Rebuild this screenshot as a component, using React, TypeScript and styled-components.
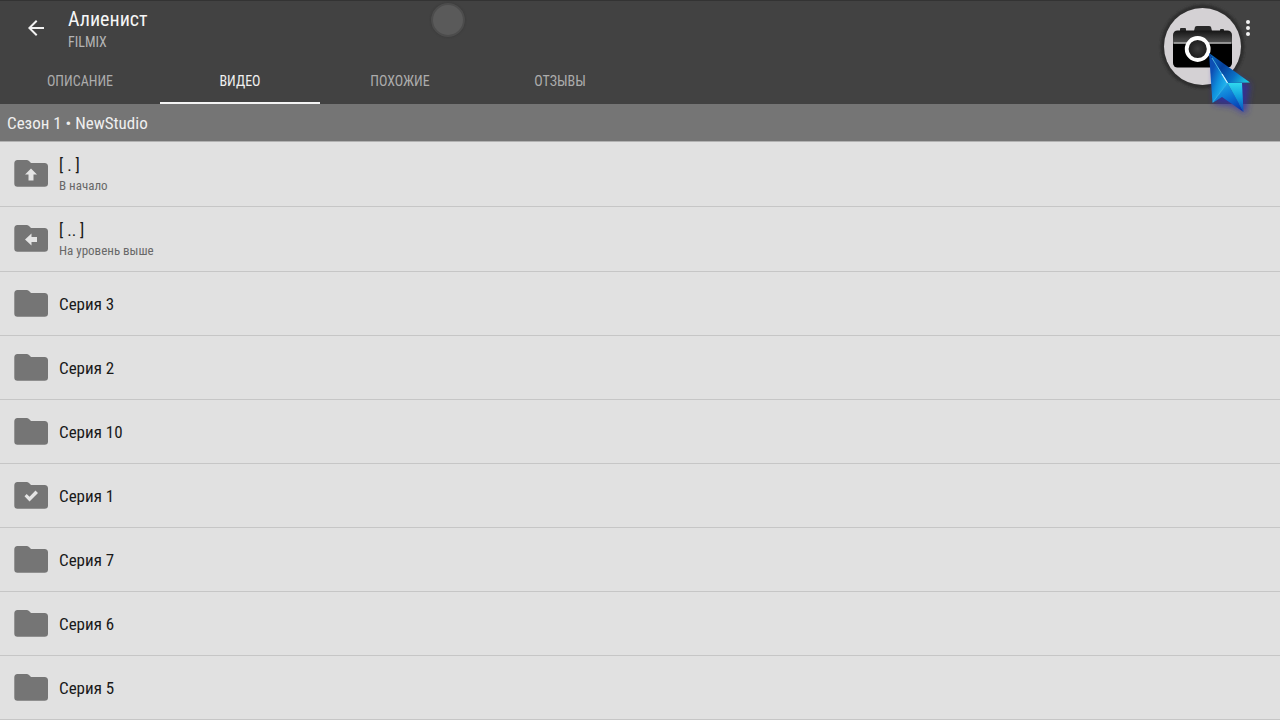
import React from "react";
import styled, { createGlobalStyle } from "styled-components";

const GlobalStyle = createGlobalStyle`
  *, *::before, *::after { box-sizing: border-box; }
  body {
    margin: 0;
    background: #e1e1e1;
    color: #191919;
    font-family: "Roboto Condensed", "Liberation Sans Narrow", Roboto, sans-serif;
  }
  button { font: inherit; color: inherit; border: 0; padding: 0; background: none; cursor: pointer; }
  h1, h2, p, ul { margin: 0; padding: 0; font-weight: 400; }
`;

const Screen = styled.div`
  position: relative;
  width: 100%;
  min-height: 100vh;
  overflow: hidden;
`;

const Header = styled.header`
  background: #424242;
  border-top: 1px solid #333333;
`;

const Toolbar = styled.div`
  display: flex;
  align-items: center;
  height: 54px;
  padding: 0 20px;
`;

const IconButton = styled.button`
  display: flex;
  align-items: center;
  justify-content: center;
  width: 32px;
  height: 32px;
  color: #f2f2f2;
`;

const Heading = styled.div`
  flex: 1;
  padding: 2px 0 0 16px;
`;

const Title = styled.h1`
  font-size: 20px;
  line-height: 26px;
  color: #f6f6f6;
`;

const Source = styled.p`
  font-size: 14px;
  line-height: 20px;
  color: #b4b4b4;
`;

const MenuButton = styled(IconButton)`
  width: 24px;
`;

const Tabs = styled.nav`
  display: flex;
`;

const Tab = styled.button<{ $active: boolean }>`
  width: 160px;
  height: 49px;
  && {
    font-size: 14px;
    line-height: 20px;
    color: ${(p) => (p.$active ? "#f0f0f0" : "#acacac")};
    padding-top: 4px;
    border-bottom: 2px solid ${(p) => (p.$active ? "#f4f4f4" : "transparent")};
  }
`;

const SeasonBar = styled.h2`
  height: 38px;
  padding: 0 7px;
  font-size: 17px;
  line-height: 38px;
  color: #efefef;
  background: #757575;
  border-bottom: 1px solid #b2b2b2;
`;

const List = styled.ul`
  list-style: none;
`;

const Row = styled.button<{ $tall: boolean }>`
  display: flex;
  align-items: center;
  gap: 11px;
  width: 100%;
  height: ${(p) => (p.$tall ? 65 : 64)}px;
  && {
    padding: 0 14px;
    text-align: left;
    border-bottom: 1px solid #c6c6c6;
  }
`;

const RowText = styled.span<{ $tall: boolean }>`
  display: flex;
  flex-direction: column;
  padding-top: ${(p) => (p.$tall ? 2 : 0)}px;
`;

const RowTitle = styled.span`
  font-size: 17px;
  line-height: 22px;
`;

const RowNote = styled.span`
  font-size: 13px;
  line-height: 20px;
  color: #686868;
`;

const TouchDot = styled.span`
  position: absolute;
  top: 3px;
  left: 35%;
  width: 34px;
  height: 34px;
  margin-left: -17px;
  border-radius: 50%;
  background: #5a5a5a;
  border: 2px solid #4c4c4c;
  box-shadow: 0 0 2px #363636;
  pointer-events: none;
`;

const CaptureButton = styled.button`
  position: absolute;
  top: 0;
  right: 20px;
  width: 110px;
  height: 124px;
`;

type Mark = "none" | "up" | "left" | "check";

const marks: Record<Mark, string> = {
  none: "",
  up: "M17 8.5 L23 14.5 H19.5 V20.5 H14.5 V14.5 H11 Z",
  left: "M11 14.5 L17.5 8.5 V12 H23 V17 H17.5 V20.5 Z",
  check: "M10.5 14.3 L12.7 11.9 L15.5 14.7 L21.5 8.5 L24 10.9 L15.5 19.5 Z",
};

function Folder({ mark }: { mark: Mark }) {
  return (
    <svg width="34" height="28" viewBox="0 0 34 28" aria-hidden="true">
      <path
        d="M3.5 0 H12.5 Q14 0 15 1 L17 3 H30.5 Q34 3 34 6.5 V23.5 Q34 26.8 30.5 26.8 H3.5 Q.3 26.8 .3 23.5 V3.5 Q.3 0 3.5 0 Z"
        fill="#757575"
      />
      {mark !== "none" && <path d={marks[mark]} fill="#e4e4e4" />}
    </svg>
  );
}

function CameraArt() {
  return (
    <svg width="110" height="124" viewBox="1150 0 110 124" aria-hidden="true">
      <defs>
        <linearGradient id="body" x1="0" y1="0" x2="0" y2="1">
          <stop offset="0" stopColor="#151515" />
          <stop offset=".3" stopColor="#4a4a4a" />
          <stop offset=".36" stopColor="#000" />
          <stop offset="1" stopColor="#000" />
        </linearGradient>
        <radialGradient id="lens">
          <stop offset="0" stopColor="#3c3c3c" />
          <stop offset="1" stopColor="#181818" />
        </radialGradient>
        <linearGradient id="wing" gradientUnits="userSpaceOnUse" x1="1210" y1="54" x2="1250" y2="84">
          <stop offset="0" stopColor="#0a6cc4" />
          <stop offset=".35" stopColor="#06409c" />
          <stop offset=".65" stopColor="#0a6fc4" />
          <stop offset="1" stopColor="#1fe0e6" />
        </linearGradient>
        <linearGradient id="fold" gradientUnits="userSpaceOnUse" x1="1209" y1="80" x2="1226" y2="86">
          <stop offset="0" stopColor="#0d4fb4" />
          <stop offset=".5" stopColor="#0f8fdc" />
          <stop offset="1" stopColor="#22b6ee" />
        </linearGradient>
        <linearGradient id="tail" gradientUnits="userSpaceOnUse" x1="1226" y1="84" x2="1238" y2="112">
          <stop offset="0" stopColor="#1aa4e6" />
          <stop offset=".5" stopColor="#0a6cd0" />
          <stop offset="1" stopColor="#0a30a8" />
        </linearGradient>
        <linearGradient id="keel" x1="0" y1="0" x2="0" y2="1">
          <stop offset="0" stopColor="#2fd8ee" />
          <stop offset=".5" stopColor="#0f9cdc" />
          <stop offset="1" stopColor="#0846b8" />
        </linearGradient>
        <filter id="glow" x="-40%" y="-40%" width="180%" height="180%">
          <feGaussianBlur stdDeviation="3" />
        </filter>
        <filter id="rim" x="-20%" y="-20%" width="140%" height="140%">
          <feGaussianBlur stdDeviation=".8" />
        </filter>
      </defs>
      <circle cx="1202.5" cy="46.5" r="42" fill="#2f2f2f" filter="url(#rim)" />
      <circle cx="1202.5" cy="46.5" r="38.5" fill="#d4d1d4" />
      <path d="M1180 31 V29 Q1180 28 1181 28 H1185 Q1186 28 1186 29 V31 Z" fill="#292929" />
      <path d="M1220 31 V30 Q1220 29 1221 29 H1223 Q1224 29 1224 30 V31 Z" fill="#292929" />
      <path d="M1194 31 L1195 27 Q1195.5 26 1197 26 H1209 Q1210.5 26 1211 27 L1212 31 Z" fill="#292929" />
      <rect x="1173" y="30.5" width="59" height="37" rx="4.5" fill="url(#body)" />
      <path d="M1173.5 43 H1231.5" stroke="#b8b8b8" strokeWidth="1.4" />
      <circle cx="1197.7" cy="49" r="11" fill="url(#lens)" stroke="#fff" strokeWidth="3.8" />
      <path d="M1214 64 L1250 84 L1246 114 L1232 106 L1214 104 Z" fill="#2f2cb4" opacity=".7" filter="url(#glow)" />
      <path d="M1209 53 L1250 82.5 L1227.5 83 Z" fill="url(#wing)" />
      <path d="M1209 53 L1227.5 83 L1212.5 103 Z" fill="url(#fold)" />
      <path d="M1227.5 83 L1212.5 103 L1222 97 L1243.5 112 Z" fill="url(#tail)" />
      <path d="M1227.5 83 H1242 L1243.5 112 Z" fill="url(#keel)" />
      <path d="M1212 58 L1227.5 83" fill="none" stroke="#5ccdf4" strokeWidth=".8" />
      <path d="M1222 74 L1227.5 83" fill="none" stroke="#d4f6ff" strokeWidth="1.2" />
      <path d="M1227.5 83 L1213 102" fill="none" stroke="#3cc8f2" strokeWidth=".6" />
    </svg>
  );
}

const tabs = ["ОПИСАНИЕ", "ВИДЕО", "ПОХОЖИЕ", "ОТЗЫВЫ"];

const entries: { title: string; note?: string; mark?: Mark }[] = [
  { title: "[ . ]", note: "В начало", mark: "up" },
  { title: "[ .. ]", note: "На уровень выше", mark: "left" },
  { title: "Серия 3" },
  { title: "Серия 2" },
  { title: "Серия 10" },
  { title: "Серия 1", mark: "check" },
  { title: "Серия 7" },
  { title: "Серия 6" },
  { title: "Серия 5" },
];

export default function App() {
  return (
    <Screen>
      <GlobalStyle />
      <Header>
        <Toolbar>
          <IconButton aria-label="Назад">
            <svg width="24" height="24" viewBox="0 0 24 24" aria-hidden="true">
              <path d="M20 11H7.83l5.59-5.59L12 4l-8 8 8 8 1.41-1.41L7.83 13H20v-2z" fill="currentColor" />
            </svg>
          </IconButton>
          <Heading>
            <Title>Алиенист</Title>
            <Source>FILMIX</Source>
          </Heading>
          <MenuButton aria-label="Меню">
            <svg width="24" height="24" viewBox="0 0 24 24" aria-hidden="true">
              <g fill="currentColor">
                <circle cx="12" cy="6" r="2" />
                <circle cx="12" cy="12" r="2" />
                <circle cx="12" cy="18" r="2" />
              </g>
            </svg>
          </MenuButton>
        </Toolbar>
        <Tabs>
          {tabs.map((name) => (
            <Tab key={name} $active={name === "ВИДЕО"}>
              {name}
            </Tab>
          ))}
        </Tabs>
      </Header>
      <SeasonBar>Сезон 1 • NewStudio</SeasonBar>
      <List>
        {entries.map(({ title, note, mark = "none" }) => {
          const tall = note !== undefined;
          return (
            <li key={title}>
              <Row $tall={tall}>
                <Folder mark={mark} />
                <RowText $tall={tall}>
                  <RowTitle>{title}</RowTitle>
                  {tall && <RowNote>{note}</RowNote>}
                </RowText>
              </Row>
            </li>
          );
        })}
      </List>
      <TouchDot />
      <CaptureButton aria-label="Снимок экрана">
        <CameraArt />
      </CaptureButton>
    </Screen>
  );
}
